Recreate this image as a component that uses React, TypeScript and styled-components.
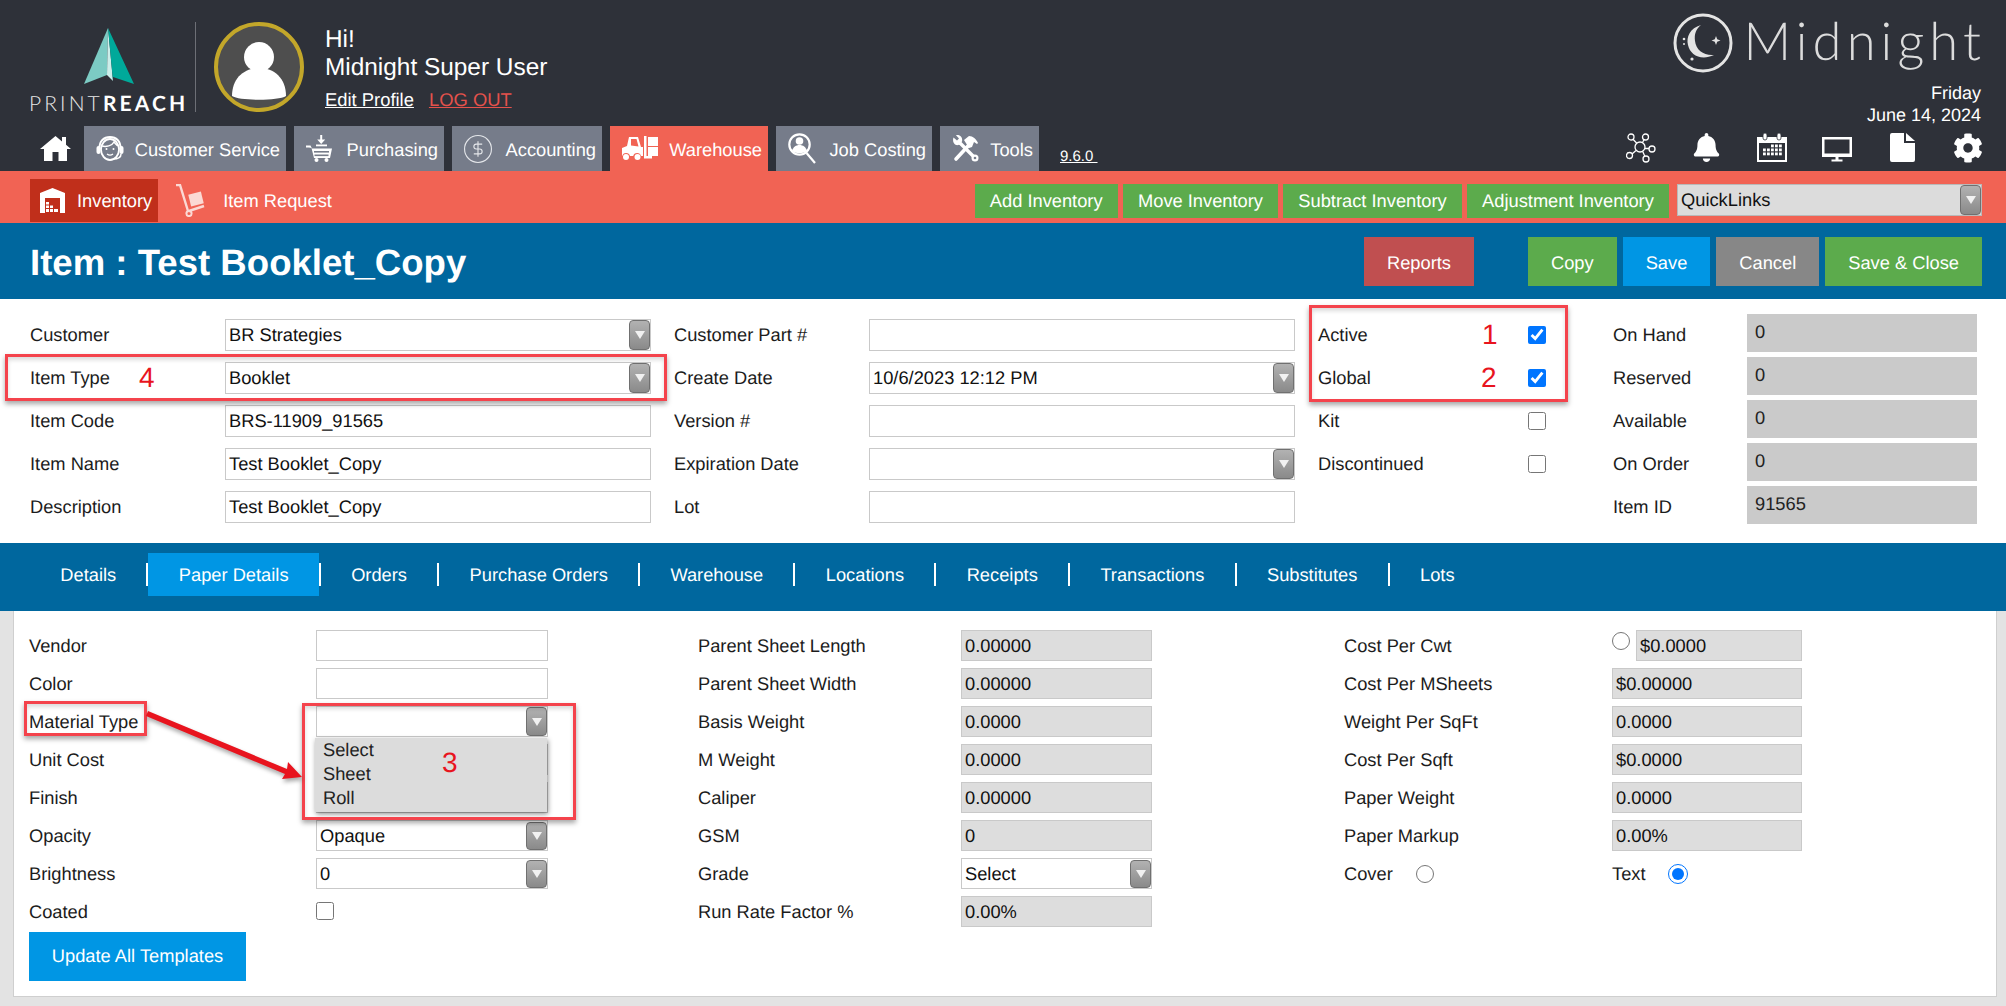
import React from 'react';
import { FaBell, FaCog } from 'react-icons/fa';
import styled, { createGlobalStyle } from 'styled-components';

const GlobalStyle = createGlobalStyle`
  html, body {
    margin: 0;
    padding: 0;
    background: #fff;
  }
  body {
    font-family: 'Liberation Sans', Arial, sans-serif;
    font-size: 18.3px;
    color: #1c1c1c;
    text-rendering: geometricPrecision;
  }
`;

const Page = styled.div`
  position: relative;
  width: 2006px;
  height: 1006px;
  overflow: hidden;
  display: flex;
  flex-direction: column;
`;

/* ---------- dark header ---------- */

const Header = styled.header`
  height: 171px;
  background: #2e3139;
  color: #fff;
  display: flex;
  flex-direction: column;
`;

const HeaderTop = styled.div`
  height: 126px;
  display: flex;
  padding: 0 25px 0 29px;
  box-sizing: border-box;
`;

const Logo = styled.div`
  width: 166px;
  display: flex;
  flex-direction: column;
  padding-top: 28px;
  box-sizing: border-box;
`;

const LogoMark = styled.svg`
  width: 50px;
  height: 56px;
  margin-left: 55px;
`;

const LogoText = styled.div`
  margin-top: 9px;
  font-family: Lato, 'Liberation Sans', sans-serif;
  font-size: 21px;
  line-height: 21px;
  letter-spacing: 3.1px;
  font-weight: 300;
  white-space: nowrap;
  color: #e8e8e8;

  b {
    font-weight: 700;
    color: #fff;
  }
`;

const LogoDivider = styled.div`
  width: 1px;
  height: 90px;
  margin: 22px 18px 0 0;
  background: #6d6f76;
`;

const Avatar = styled.div`
  width: 90px;
  height: 90px;
  margin-top: 22px;
  border-radius: 50%;
  border: 4px solid #c3a72a;
  box-sizing: border-box;
  background: #4e4e4e;
  display: flex;
  align-items: center;
  justify-content: center;
  flex: none;
`;

const Greeting = styled.div`
  margin-left: 21px;
  padding-top: 26px;
  font-size: 24.4px;
  line-height: 28px;
`;

const ProfileLinks = styled.div`
  margin-top: 7px;
  display: flex;
  gap: 15px;
  font-size: 18.4px;
  line-height: 22px;
`;

const ProfileLink = styled.a<{ $danger?: boolean }>`
  color: ${props => (props.$danger ? '#e4524c' : '#fff')};
  text-decoration: underline;
`;

const Brand = styled.div`
  margin-left: auto;
  display: flex;
  flex-direction: column;
  align-items: flex-end;
`;

const BrandLogo = styled.div`
  display: flex;
  align-items: flex-start;
  gap: 10px;
  margin-top: 13px;
  height: 71px;
`;

const BrandName = styled.div`
  font-family: Lato, 'Open Sans', sans-serif;
  font-size: 52.5px;
  font-weight: 300;
  line-height: 52px;
  margin-top: 2px;
  letter-spacing: 5.1px;
  margin-right: -5px;
  color: #dcdcdc;
`;

const DateText = styled.div`
  text-align: right;
  font-size: 18px;
  line-height: 22px;
`;

const NavRow = styled.nav`
  height: 45px;
  display: flex;
  padding: 0 5px 0 40px;
`;

const HomeLink = styled.a`
  width: 31px;
  margin-right: 13px;
  padding-top: 9px;
  box-sizing: border-box;
`;

const NavTabs = styled.div`
  display: flex;
  gap: 8px;
`;

const NavTab = styled.a<{ $width: number; $active?: boolean }>`
  width: ${props => props.$width}px;
  box-sizing: border-box;
  padding: 0 6px 0 12px;
  display: flex;
  align-items: center;
  justify-content: space-between;
  white-space: nowrap;
  color: #fff;
  background: ${props => (props.$active ? '#f16354' : '#767c8a')};
`;

const NavLabel = styled.span`
  padding-top: 3px;
`;

const Version = styled.a`
  margin-left: 21px;
  align-self: flex-end;
  margin-bottom: 6px;
  font-size: 15px;
  line-height: 17px;
  color: #fff;
  text-decoration: underline;
  white-space: pre;
`;

const UtilityIcons = styled.div`
  margin-left: auto;
  display: grid;
  grid-template-columns: repeat(6, 65.5px);
  justify-items: center;
  padding-top: 7px;
  height: 29px;
  color: #fff;
`;

/* ---------- coral sub navigation ---------- */

const SubNav = styled.div`
  height: 52px;
  background: #f16354;
  color: #fff;
  display: flex;
  padding: 0 24px 0 30px;
  box-sizing: border-box;
`;

const SubTab = styled.a<{ $active?: boolean }>`
  height: 43px;
  margin-top: 8px;
  padding: 0 6px 0 10px;
  display: flex;
  align-items: center;
  gap: 12px;
  white-space: nowrap;
  background: ${props => (props.$active ? '#c02f1b' : 'transparent')};
`;

const SubTabRequest = styled(SubTab)`
  margin-left: 8px;
  gap: 17px;
`;

const SubLabel = styled.span`
  padding-top: 1px;
`;

const SubActions = styled.div`
  margin-left: auto;
  display: flex;
  align-items: flex-start;
  gap: 5px;
  padding-top: 13px;
`;

const SubAction = styled.a`
  height: 34px;
  line-height: 34px;
  padding: 0 15.2px;
  background: #5cab4c;
  color: #fff;
  white-space: nowrap;
`;

const QuickLinks = styled.div`
  width: 305px;
  height: 32px;
  margin-left: 3px;
  box-sizing: border-box;
  padding-left: 3px;
  border: 1px solid #b9b9b9;
  background: #dcdcdc;
  color: #111;
  display: flex;
  align-items: center;
  justify-content: space-between;
`;

/* ---------- title bar ---------- */

const TitleBar = styled.div`
  height: 76px;
  background: #00679e;
  display: flex;
  align-items: flex-start;
  padding: 14px 24px 0 30px;
  box-sizing: border-box;
`;

const Title = styled.h1`
  margin: 0;
  font-size: 36.6px;
  line-height: 51px;
  font-weight: 700;
  color: #fff;
  white-space: nowrap;
`;

const TitleButton = styled.a<{ $color: string }>`
  height: 49px;
  line-height: 51px;
  padding: 0 23px;
  margin-left: 6px;
  color: #fff;
  background: ${props => props.$color};
  white-space: nowrap;
`;

const ReportsButton = styled(TitleButton)`
  margin-left: auto;
  margin-right: 48px;
`;

/* ---------- item form ---------- */

const ItemForm = styled.section`
  height: 244px;
  box-sizing: border-box;
  padding: 15px 0 0 30px;
  display: flex;
`;

const FormColumn = styled.div<{ $label: number; $field: number; $left?: number; $pitch: number }>`
  display: grid;
  grid-template-columns: ${props => props.$label}px ${props => props.$field}px;
  grid-auto-rows: ${props => props.$pitch}px;
  margin-left: ${props => props.$left ?? 0}px;
  align-content: start;
`;

const Label = styled.div`
  align-self: center;
  padding-bottom: 2px;
  white-space: nowrap;
`;

const PaperLabel = styled.div`
  line-height: 31.5px;
  white-space: nowrap;
`;

const Field = styled.div<{ $filled?: boolean }>`
  height: 32px;
  margin-top: 5px;
  box-sizing: border-box;
  padding-left: 3px;
  border: 1px solid #c9c9c9;
  background: ${props => (props.$filled ? '#dddddd' : '#fff')};
  display: flex;
  align-items: center;
  justify-content: space-between;
  color: #111;
  white-space: nowrap;
`;

const PaperField = styled(Field)`
  height: 31px;
  margin-top: 0;
  padding-top: 1px;
`;

const MaterialField = styled(PaperField)`
  position: relative;
  padding-top: 0;
`;

const StockValue = styled.div`
  height: 38px;
  box-sizing: border-box;
  padding: 0 8px 2px;
  background: #cacaca;
  display: flex;
  align-items: center;
  color: #222;
`;

const SelectArrow = styled.span`
  width: 21px;
  align-self: stretch;
  flex: none;
  box-sizing: border-box;
  border: 1px solid #707070;
  border-radius: 4px;
  background: linear-gradient(#b2b2b2, #8a8a8a);
  display: flex;
  align-items: center;
  justify-content: center;

  &::after {
    content: '';
    border-left: 5px solid transparent;
    border-right: 5px solid transparent;
    border-top: 8px solid #f1f1f1;
  }
`;

const Check = styled.input.attrs({ type: 'checkbox' })`
  width: 18px;
  height: 18px;
  margin: 0 0 2px;
  align-self: center;
`;

const Radio = styled.input.attrs({ type: 'radio' })<{ $size?: number }>`
  width: ${props => props.$size ?? 18}px;
  height: ${props => props.$size ?? 18}px;
  margin: 0;
  flex: none;
`;

/* ---------- tab bar ---------- */

const TabBar = styled.div`
  height: 68px;
  box-sizing: border-box;
  background: #00679e;
  padding: 10px 0 0 30px;
`;

const TabList = styled.div`
  display: flex;
  align-items: center;
  height: 43px;
`;

const Tab = styled.a<{ $active?: boolean }>`
  height: 43px;
  line-height: 44px;
  padding: 0 30.3px;
  color: #fff;
  white-space: nowrap;
  background: ${props => (props.$active ? '#0096e4' : 'transparent')};
`;

const TabDivider = styled.span`
  width: 2px;
  height: 23px;
  background: #fff;
`;

/* ---------- paper details ---------- */

const PaperArea = styled.section`
  flex: 1;
  background: #e3e3e3;
  padding: 0 9px 9px 13px;
  display: flex;
`;

const PaperPanel = styled.div`
  flex: 1;
  background: #fff;
  border: 1px solid #cfcfcf;
  border-top: 0;
  padding: 19px 0 0 15px;
  display: flex;
  align-items: flex-start;
`;

const PaperStack = styled.div`
  display: flex;
  flex-direction: column;
`;

const UpdateButton = styled.a`
  width: 217px;
  height: 49px;
  line-height: 48px;
  margin-top: -2px;
  text-align: center;
  color: #fff;
  background: #0096e4;
`;

const RadioCell = styled.div`
  display: flex;
  gap: 6px;
  align-items: flex-start;
  padding-top: 2px;
`;

const RadioValue = styled(PaperField)`
  flex: 1;
  margin-top: -2px;
`;

const ChoiceCell = styled.div`
  display: flex;
  align-items: center;
  height: 32px;
`;

const ChoiceLabel = styled.span<{ $width: number }>`
  width: ${props => props.$width}px;
`;

const OptionList = styled.div`
  position: absolute;
  left: -2px;
  top: 31px;
  width: 232px;
  height: 74px;
  padding: 0 0 0 8px;
  box-sizing: border-box;
  background: #dcdcdc;
  box-shadow: 1px 2px 5px rgba(0, 0, 0, 0.45);
  line-height: 24px;
  color: #222;
`;

/* ---------- review markup drawn over the page ---------- */

const MarkBox = styled.div<{ $x: number; $y: number; $w: number; $h: number }>`
  position: absolute;
  left: ${props => props.$x}px;
  top: ${props => props.$y}px;
  width: ${props => props.$w}px;
  height: ${props => props.$h}px;
  box-sizing: border-box;
  border: 3px solid #f4434c;
  box-shadow: 0 3px 5px rgba(0, 0, 0, 0.35), inset 0 3px 4px rgba(0, 0, 0, 0.14);
`;

const MarkNumber = styled.div<{ $x: number; $y: number }>`
  position: absolute;
  left: ${props => props.$x}px;
  top: ${props => props.$y}px;
  font-size: 28px;
  line-height: 28px;
  color: #e8141e;
`;

const MarkArrow = styled.svg`
  position: absolute;
  left: 140px;
  top: 705px;
  width: 170px;
  height: 85px;
  filter: drop-shadow(1px 3px 2px rgba(0, 0, 0, 0.35));
`;

const SelectField = ({ value, as }: { value?: string; as?: typeof PaperField }) => {
  const Box = as ?? Field;
  return (
    <Box>
      <span>{value ?? ''}</span>
      <SelectArrow />
    </Box>
  );
};

const navItems = [
  { label: 'Customer Service', width: 202, icon: <HeadsetIcon /> },
  { label: 'Purchasing', width: 150, icon: <CartIcon /> },
  { label: 'Accounting', width: 150, icon: <DollarIcon /> },
  { label: 'Warehouse', width: 158, icon: <ForkliftIcon />, active: true },
  { label: 'Job Costing', width: 156, icon: <SearchUserIcon /> },
  { label: 'Tools', width: 99, icon: <ToolsIcon /> },
];

const tabs = [
  'Details',
  'Paper Details',
  'Orders',
  'Purchase Orders',
  'Warehouse',
  'Locations',
  'Receipts',
  'Transactions',
  'Substitutes',
  'Lots',
];

const middleRows = [
  ['Parent Sheet Length', '0.00000'],
  ['Parent Sheet Width', '0.00000'],
  ['Basis Weight', '0.0000'],
  ['M Weight', '0.0000'],
  ['Caliper', '0.00000'],
  ['GSM', '0'],
];

const costRows = [
  ['Cost Per MSheets', '$0.00000'],
  ['Weight Per SqFt', '0.0000'],
  ['Cost Per Sqft', '$0.0000'],
  ['Paper Weight', '0.0000'],
  ['Paper Markup', '0.00%'],
];

const stockRows = [
  ['On Hand', '0'],
  ['Reserved', '0'],
  ['Available', '0'],
  ['On Order', '0'],
  ['Item ID', '91565'],
];

export default function App() {
  return (
    <Page>
      <GlobalStyle />

      <Header>
        <HeaderTop>
          <Logo>
            <LogoMark viewBox="0 0 50 56">
              <polygon points="24,0 0,56 23,47" fill="#7ccbc4" />
              <polygon points="24,0 23,47 29,53" fill="#cdeeea" />
              <polygon points="24,0 50,56 29,49 29,53" fill="#00a99a" />
            </LogoMark>
            <LogoText>
              PRINT<b>REACH</b>
            </LogoText>
          </Logo>
          <LogoDivider />
          <Avatar>
            <svg width="82" height="82" viewBox="0 0 82 82">
              <circle cx="41" cy="31" r="15" fill="#fff" />
              <path d="M14 70C14 52 26 42 41 42s27 10 27 28c-8 5-46 5-54 0z" fill="#fff" />
            </svg>
          </Avatar>
          <Greeting>
            <div>Hi!</div>
            <div>Midnight Super User</div>
            <ProfileLinks>
              <ProfileLink>Edit Profile</ProfileLink>
              <ProfileLink $danger>LOG OUT</ProfileLink>
            </ProfileLinks>
          </Greeting>
          <Brand>
            <BrandLogo>
              <svg width="60" height="60" viewBox="0 0 60 60" fill="#e4e4e4">
                <circle cx="30" cy="30" r="28" fill="none" stroke="#e4e4e4" strokeWidth="3" />
                <path d="M28 12C17 15 13 24 15 32c2 10 13 16 26 10-10 1-18-5-19-14-1-7 1-12 6-16z" />
                <path d="M43 23l1.2 3.3 3.3 1.2-3.3 1.2L43 32l-1.2-3.3-3.3-1.2 3.3-1.2z" />
                <circle cx="11" cy="26" r="1.3" />
                <circle cx="11" cy="31" r="1" />
                <circle cx="19" cy="46" r="1.6" />
              </svg>
              <BrandName>Midnight</BrandName>
            </BrandLogo>
            <DateText>
              <div>Friday</div>
              <div>June 14, 2024</div>
            </DateText>
          </Brand>
        </HeaderTop>

        <NavRow>
          <HomeLink>
            <svg width="31" height="26" viewBox="0 0 31 26" fill="#fff">
              <path d="M15.5 1L22 6.4V2h4v7.7L31 14h-4v12h-8.500v-9h-6v9H4V14H0z" />
            </svg>
          </HomeLink>
          <NavTabs>
            {navItems.map(item => (
              <NavTab key={item.label} $width={item.width} $active={item.active}>
                {item.icon}
                <NavLabel>{item.label}</NavLabel>
              </NavTab>
            ))}
          </NavTabs>
          <Version>9.6.0 </Version>
          <UtilityIcons>
            <NetworkIcon />
            <FaBell size={29} />
            <CalendarIcon />
            <MonitorIcon />
            <FileIcon />
            <FaCog size={30} />
          </UtilityIcons>
        </NavRow>
      </Header>

      <SubNav>
        <SubTab $active>
          <InventoryIcon />
          <SubLabel>Inventory</SubLabel>
        </SubTab>
        <SubTabRequest>
          <HandTruckIcon />
          <SubLabel>Item Request</SubLabel>
        </SubTabRequest>
        <SubActions>
          <SubAction>Add Inventory</SubAction>
          <SubAction>Move Inventory</SubAction>
          <SubAction>Subtract Inventory</SubAction>
          <SubAction>Adjustment Inventory</SubAction>
          <QuickLinks>
            QuickLinks
            <SelectArrow />
          </QuickLinks>
        </SubActions>
      </SubNav>

      <TitleBar>
        <Title>Item : Test Booklet_Copy</Title>
        <ReportsButton $color="#c04f50">Reports</ReportsButton>
        <TitleButton $color="#5cab4c">Copy</TitleButton>
        <TitleButton $color="#0096e4">Save</TitleButton>
        <TitleButton $color="#878787">Cancel</TitleButton>
        <TitleButton $color="#5cab4c">Save &amp; Close</TitleButton>
      </TitleBar>

      <ItemForm>
        <FormColumn $label={195} $field={426} $pitch={43}>
          <Label>Customer</Label>
          <SelectField value="BR Strategies" />
          <Label>Item Type</Label>
          <SelectField value="Booklet" />
          <Label>Item Code</Label>
          <Field>BRS-11909_91565</Field>
          <Label>Item Name</Label>
          <Field>Test Booklet_Copy</Field>
          <Label>Description</Label>
          <Field>Test Booklet_Copy</Field>
        </FormColumn>
        <FormColumn $left={23} $label={195} $field={426} $pitch={43}>
          <Label>Customer Part #</Label>
          <Field />
          <Label>Create Date</Label>
          <SelectField value="10/6/2023 12:12 PM" />
          <Label>Version #</Label>
          <Field />
          <Label>Expiration Date</Label>
          <SelectField />
          <Label>Lot</Label>
          <Field />
        </FormColumn>
        <FormColumn $left={23} $label={210} $field={85} $pitch={43}>
          <Label>Active</Label>
          <Check defaultChecked />
          <Label>Global</Label>
          <Check defaultChecked />
          <Label>Kit</Label>
          <Check />
          <Label>Discontinued</Label>
          <Check />
        </FormColumn>
        <FormColumn $label={134} $field={230} $pitch={43}>
          {stockRows.map(([label, value]) => (
            <React.Fragment key={label}>
              <Label>{label}</Label>
              <StockValue>{value}</StockValue>
            </React.Fragment>
          ))}
        </FormColumn>
      </ItemForm>

      <TabBar>
        <TabList>
          {tabs.map((tab, index) => (
            <React.Fragment key={tab}>
              <Tab $active={tab === 'Paper Details'}>{tab}</Tab>
              {index < tabs.length - 1 && <TabDivider />}
            </React.Fragment>
          ))}
        </TabList>
      </TabBar>

      <PaperArea>
        <PaperPanel>
          <PaperStack>
            <FormColumn $label={287} $field={232} $pitch={38}>
              <PaperLabel>Vendor</PaperLabel>
              <PaperField />
              <PaperLabel>Color</PaperLabel>
              <PaperField />
              <PaperLabel>Material Type</PaperLabel>
              <MaterialField>
                <span />
                <SelectArrow />
                <OptionList>
                  <div>Select</div>
                  <div>Sheet</div>
                  <div>Roll</div>
                </OptionList>
              </MaterialField>
              <PaperLabel>Unit Cost</PaperLabel>
              <PaperField />
              <PaperLabel>Finish</PaperLabel>
              <SelectField as={PaperField} />
              <PaperLabel>Opacity</PaperLabel>
              <SelectField as={PaperField} value="Opaque" />
              <PaperLabel>Brightness</PaperLabel>
              <SelectField as={PaperField} value="0" />
              <PaperLabel>Coated</PaperLabel>
              <ChoiceCell>
                <Check />
              </ChoiceCell>
            </FormColumn>
            <UpdateButton>Update All Templates</UpdateButton>
          </PaperStack>

          <FormColumn $left={150} $label={263} $field={191} $pitch={38}>
            {middleRows.map(([label, value]) => (
              <React.Fragment key={label}>
                <PaperLabel>{label}</PaperLabel>
                <PaperField $filled>{value}</PaperField>
              </React.Fragment>
            ))}
            <PaperLabel>Grade</PaperLabel>
            <SelectField as={PaperField} value="Select" />
            <PaperLabel>Run Rate Factor %</PaperLabel>
            <PaperField $filled>0.00%</PaperField>
          </FormColumn>

          <FormColumn $left={192} $label={268} $field={190} $pitch={38}>
            <PaperLabel>Cost Per Cwt</PaperLabel>
            <RadioCell>
              <Radio name="cost" />
              <RadioValue $filled>$0.0000</RadioValue>
            </RadioCell>
            {costRows.map(([label, value]) => (
              <React.Fragment key={label}>
                <PaperLabel>{label}</PaperLabel>
                <PaperField $filled>{value}</PaperField>
              </React.Fragment>
            ))}
            <ChoiceCell>
              <ChoiceLabel $width={72}>Cover</ChoiceLabel>
              <Radio name="stock" />
            </ChoiceCell>
            <ChoiceCell>
              <ChoiceLabel $width={56}>Text</ChoiceLabel>
              <Radio name="stock" $size={20} defaultChecked />
            </ChoiceCell>
          </FormColumn>
        </PaperPanel>
      </PaperArea>

      <MarkBox $x={5} $y={354} $w={662} $h={47} />
      <MarkBox $x={1309} $y={305} $w={259} $h={97} />
      <MarkBox $x={302} $y={703} $w={274} $h={117} />
      <MarkBox $x={24} $y={701} $w={123} $h={35} />
      <MarkNumber $x={139} $y={364}>4</MarkNumber>
      <MarkNumber $x={1482} $y={321}>1</MarkNumber>
      <MarkNumber $x={1481} $y={364}>2</MarkNumber>
      <MarkNumber $x={442} $y={749}>3</MarkNumber>
      <MarkArrow viewBox="0 0 170 85">
        <polygon points="8,6 6,11 145,69 142,74 162,72 148,57 147,64" fill="#e8141e" />
      </MarkArrow>
    </Page>
  );
}

function HeadsetIcon() {
  return (
    <svg width="28" height="26" viewBox="0 0 28 26" fill="none" stroke="#fff">
      <path d="M3.500 13C3 5 8 1 14 1s11 4 10.500 12" strokeWidth="2" />
      <ellipse cx="14" cy="13.500" rx="9" ry="10.500" strokeWidth="1.800" />
      <path d="M6 10c4 1 10 0 12-4 1 2 3 3 4 4" strokeWidth="1.500" />
      <rect x="0.500" y="10" width="4" height="8" rx="2" fill="#fff" stroke="none" />
      <rect x="23.500" y="10" width="4" height="8" rx="2" fill="#fff" stroke="none" />
      <path d="M25 18c0 4-4 5-8 5" strokeWidth="1.500" />
      <path d="M11 18c2 1.500 4 1.500 6 0" strokeWidth="1.300" />
      <circle cx="10.500" cy="13" r="1" fill="#fff" stroke="none" />
      <circle cx="17.500" cy="13" r="1" fill="#fff" stroke="none" />
    </svg>
  );
}

function CartIcon() {
  return (
    <svg width="27" height="27" viewBox="0 0 27 27" fill="#fff">
      <path d="M14.200 0h2v4.500h3L15.200 9l-4-4.500h3z" />
      <rect x="10" y="9.500" width="11" height="1.800" />
      <path d="M0 10.500h4.500l1.500 3H26l-2 9.500H8L5.500 13 3 12.500H0z" />
      <rect x="8" y="16" width="15" height="1.600" fill="#767c8a" />
      <rect x="8.500" y="19.500" width="14" height="1.600" fill="#767c8a" />
      <circle cx="10.500" cy="25" r="2" />
      <circle cx="20.500" cy="25" r="2" />
    </svg>
  );
}

function DollarIcon() {
  return (
    <svg width="28" height="28" viewBox="2 2 20 20" fill="none" stroke="#e4e6ea" strokeWidth="0.800">
      <circle cx="12" cy="12" r="9.600" />
      <path d="M15 8.500h-4.200a1.700 1.700 0 1 0 0 3.500h2.400a1.700 1.700 0 1 1 0 3.500H9M12 6.500v11" />
    </svg>
  );
}

function ForkliftIcon() {
  return (
    <svg width="37" height="25" viewBox="0 0 37 25" fill="#fff">
      <path d="M7 1h9l3 10h2v9h-2a4 4 0 0 0-7.800 0H8a4 4 0 0 0-7.800 0H0v-8l5-2zM9 3v6.500l7.500 1L14.500 3z" fillRule="evenodd" />
      <circle cx="4" cy="21" r="3" />
      <circle cx="15.500" cy="21" r="3" />
      <rect x="22" y="0" width="2.500" height="21" />
      <path d="M22 20h8v2.500h-8z" />
      <rect x="26" y="1" width="10" height="9" />
      <rect x="26" y="11" width="10" height="9" />
    </svg>
  );
}

function SearchUserIcon() {
  return (
    <svg width="28" height="31" viewBox="0 0 28 31" fill="none" stroke="#fff">
      <circle cx="11.500" cy="11.500" r="10.200" strokeWidth="2.200" />
      <path d="M18.500 20l8.500 10" strokeWidth="2.200" />
      <circle cx="11.500" cy="8" r="3.800" fill="#fff" stroke="none" />
      <path d="M4 18c1-4 4-6 7.500-6s6.500 2 7.500 6c-4 3-11 3-15 0z" fill="#fff" stroke="none" />
    </svg>
  );
}

function ToolsIcon() {
  return (
    <svg width="27" height="27" viewBox="0 0 27 27" fill="#fff" stroke="#fff">
      <path d="M4 24L17 10" strokeWidth="3.600" strokeLinecap="round" />
      <path d="M12 5l5-4c4 0 7 3 9 7l-1 1-3-2-2 5-3 1z" stroke="none" />
      <path d="M8 8l15 15" strokeWidth="3.400" strokeLinecap="round" />
      <path d="M1.500 2.500l3.500 3 2-2-3-3.300C7.500-.5 11 2 10 6.500L6.500 10C2.500 11 0 7 1.500 2.500z" stroke="none" />
      <circle cx="23" cy="23" r="3.500" stroke="none" />
      <circle cx="23" cy="23" r="1.300" fill="#767c8a" stroke="none" />
    </svg>
  );
}

function NetworkIcon() {
  return (
    <svg width="30" height="30" viewBox="0 0 30 30" fill="none" stroke="#fff" strokeWidth="1.300">
      <circle cx="14" cy="14" r="5" />
      <circle cx="5" cy="4" r="3" />
      <circle cx="19.500" cy="4" r="3" />
      <circle cx="26" cy="16" r="3" />
      <circle cx="20" cy="26" r="3" />
      <circle cx="3.500" cy="22.500" r="3" />
      <path d="M7 6.300l3.800 4M18 6.700l-1.600 3M23 15.500h-4M18.700 23l-2-4.500M6 21l4-3.500" />
    </svg>
  );
}

function CalendarIcon() {
  const cells = [];
  for (let row = 0; row < 3; row++) {
    for (let col = 0; col < 5; col++) {
      if (row === 0 && col < 2) continue;
      cells.push(<rect key={`${row}-${col}`} x={6 + col * 4} y={11.500 + row * 4} width="2.800" height="2.800" />);
    }
  }
  return (
    <svg width="30" height="29" viewBox="0 0 30 29" fill="#fff">
      <path d="M0 4h30v25H0zM2 10v17h26V10z" fillRule="evenodd" />
      <rect x="6" y="0" width="4" height="7" rx="2" stroke="#2e3139" strokeWidth="0.800" />
      <rect x="20" y="0" width="4" height="7" rx="2" stroke="#2e3139" strokeWidth="0.800" />
      {cells}
    </svg>
  );
}

function MonitorIcon() {
  return (
    <svg width="30" height="29" viewBox="0 0 30 29" fill="#fff">
      <path d="M0 4h30v20H0zM2.500 6.500V20.500h25V6.500z" fillRule="evenodd" />
      <rect x="13.500" y="24" width="3" height="3" />
      <rect x="9.500" y="26.500" width="11" height="2" />
    </svg>
  );
}

function FileIcon() {
  return (
    <svg width="25" height="29" viewBox="0 0 25 29" fill="#fff">
      <path d="M2 0h12v10h11v17a2 2 0 0 1-2 2H2a2 2 0 0 1-2-2V2a2 2 0 0 1 2-2z" />
      <path d="M16 0l9 8h-9z" />
    </svg>
  );
}

function InventoryIcon() {
  return (
    <svg width="25" height="25" viewBox="0 0 25 25" fill="#fff">
      <path d="M12.500 0L25 5v20h-5V10H5v15H0V5z" />
      <rect x="6" y="14" width="3" height="2.500" />
      <rect x="6" y="17.500" width="3" height="2.500" />
      <rect x="10" y="17.500" width="3" height="2.500" />
      <rect x="6" y="21" width="3" height="3" />
      <rect x="10" y="21" width="3" height="3" />
      <rect x="14" y="21" width="4" height="3" />
    </svg>
  );
}

function HandTruckIcon() {
  return (
    <svg width="30" height="33" viewBox="0 0 30 33" fill="none" stroke="#fbd9d4">
      <path d="M0 1h4l8 26" strokeWidth="2.400" />
      <path d="M13 27l15-5" strokeWidth="2.400" />
      <circle cx="13" cy="29.500" r="2.600" strokeWidth="2" />
      <rect x="13.500" y="9" width="13" height="12" transform="rotate(-14 20 15)" fill="#fbd9d4" stroke="none" />
    </svg>
  );
}
